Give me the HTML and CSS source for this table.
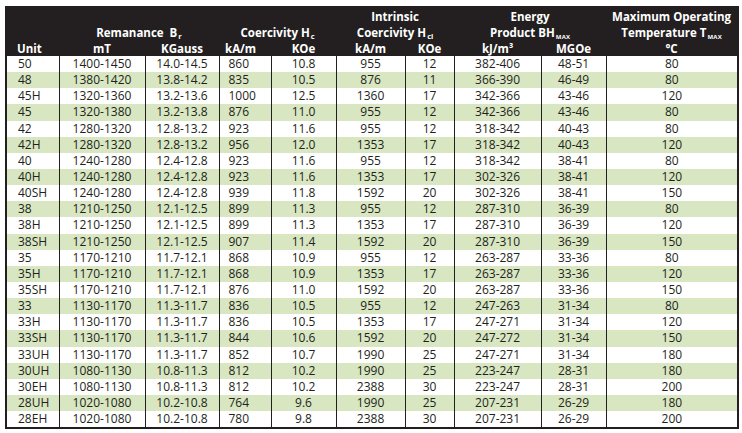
FILE: index.html
```html
<!DOCTYPE html>
<html lang="en">
<head>
<meta charset="utf-8">
<title>NdFeB Grades</title>
<link rel="stylesheet" href="styles.css">
</head>
<body>
<table class="grades">
  <colgroup>
    <col class="c-unit"><col class="c-mt"><col class="c-kg"><col class="c-hca"><col class="c-hck">
    <col class="c-hcia"><col class="c-hcik"><col class="c-kj"><col class="c-mgoe"><col class="c-temp">
  </colgroup>
  <thead>
    <tr class="h1">
      <th colspan="5"></th>
      <th colspan="2">Intrinsic</th>
      <th colspan="2">Energy</th>
      <th>Maximum Operating</th>
    </tr>
    <tr class="h2">
      <th></th>
      <th colspan="2">Remanance&nbsp; B<sub>r</sub></th>
      <th colspan="2">Coercivity H<sub>c</sub></th>
      <th colspan="2">Coercivity H<sub>ci</sub></th>
      <th colspan="2">Product BH<sub class="max">MAX</sub></th>
      <th>Temperature T<sub class="max">MAX</sub></th>
    </tr>
    <tr class="h3">
      <th class="left">Unit</th>
      <th>mT</th>
      <th>KGauss</th>
      <th class="lpad">kA/m</th>
      <th>KOe</th>
      <th>kA/m</th>
      <th>KOe</th>
      <th>kJ/m³</th>
      <th>MGOe</th>
      <th>°C</th>
    </tr>
  </thead>
  <tbody>
    <tr><td>50</td><td>1400-1450</td><td>14.0-14.5</td><td>860</td><td>10.8</td><td>955</td><td>12</td><td>382-406</td><td>48-51</td><td>80</td></tr>
    <tr><td>48</td><td>1380-1420</td><td>13.8-14.2</td><td>835</td><td>10.5</td><td>876</td><td>11</td><td>366-390</td><td>46-49</td><td>80</td></tr>
    <tr><td>45H</td><td>1320-1360</td><td>13.2-13.6</td><td>1000</td><td>12.5</td><td>1360</td><td>17</td><td>342-366</td><td>43-46</td><td>120</td></tr>
    <tr><td>45</td><td>1320-1380</td><td>13.2-13.8</td><td>876</td><td>11.0</td><td>955</td><td>12</td><td>342-366</td><td>43-46</td><td>80</td></tr>
    <tr><td>42</td><td>1280-1320</td><td>12.8-13.2</td><td>923</td><td>11.6</td><td>955</td><td>12</td><td>318-342</td><td>40-43</td><td>80</td></tr>
    <tr><td>42H</td><td>1280-1320</td><td>12.8-13.2</td><td>956</td><td>12.0</td><td>1353</td><td>17</td><td>318-342</td><td>40-43</td><td>120</td></tr>
    <tr><td>40</td><td>1240-1280</td><td>12.4-12.8</td><td>923</td><td>11.6</td><td>955</td><td>12</td><td>318-342</td><td>38-41</td><td>80</td></tr>
    <tr><td>40H</td><td>1240-1280</td><td>12.4-12.8</td><td>923</td><td>11.6</td><td>1353</td><td>17</td><td>302-326</td><td>38-41</td><td>120</td></tr>
    <tr><td>40SH</td><td>1240-1280</td><td>12.4-12.8</td><td>939</td><td>11.8</td><td>1592</td><td>20</td><td>302-326</td><td>38-41</td><td>150</td></tr>
    <tr><td>38</td><td>1210-1250</td><td>12.1-12.5</td><td>899</td><td>11.3</td><td>955</td><td>12</td><td>287-310</td><td>36-39</td><td>80</td></tr>
    <tr><td>38H</td><td>1210-1250</td><td>12.1-12.5</td><td>899</td><td>11.3</td><td>1353</td><td>17</td><td>287-310</td><td>36-39</td><td>120</td></tr>
    <tr><td>38SH</td><td>1210-1250</td><td>12.1-12.5</td><td>907</td><td>11.4</td><td>1592</td><td>20</td><td>287-310</td><td>36-39</td><td>150</td></tr>
    <tr><td>35</td><td>1170-1210</td><td>11.7-12.1</td><td>868</td><td>10.9</td><td>955</td><td>12</td><td>263-287</td><td>33-36</td><td>80</td></tr>
    <tr><td>35H</td><td>1170-1210</td><td>11.7-12.1</td><td>868</td><td>10.9</td><td>1353</td><td>17</td><td>263-287</td><td>33-36</td><td>120</td></tr>
    <tr><td>35SH</td><td>1170-1210</td><td>11.7-12.1</td><td>876</td><td>11.0</td><td>1592</td><td>20</td><td>263-287</td><td>33-36</td><td>150</td></tr>
    <tr><td>33</td><td>1130-1170</td><td>11.3-11.7</td><td>836</td><td>10.5</td><td>955</td><td>12</td><td>247-263</td><td>31-34</td><td>80</td></tr>
    <tr><td>33H</td><td>1130-1170</td><td>11.3-11.7</td><td>836</td><td>10.5</td><td>1353</td><td>17</td><td>247-271</td><td>31-34</td><td>120</td></tr>
    <tr><td>33SH</td><td>1130-1170</td><td>11.3-11.7</td><td>844</td><td>10.6</td><td>1592</td><td>20</td><td>247-272</td><td>31-34</td><td>150</td></tr>
    <tr><td>33UH</td><td>1130-1170</td><td>11.3-11.7</td><td>852</td><td>10.7</td><td>1990</td><td>25</td><td>247-271</td><td>31-34</td><td>180</td></tr>
    <tr><td>30UH</td><td>1080-1130</td><td>10.8-11.3</td><td>812</td><td>10.2</td><td>1990</td><td>25</td><td>223-247</td><td>28-31</td><td>180</td></tr>
    <tr><td>30EH</td><td>1080-1130</td><td>10.8-11.3</td><td>812</td><td>10.2</td><td>2388</td><td>30</td><td>223-247</td><td>28-31</td><td>200</td></tr>
    <tr><td>28UH</td><td>1020-1080</td><td>10.2-10.8</td><td>764</td><td>9.6</td><td>1990</td><td>25</td><td>207-231</td><td>26-29</td><td>180</td></tr>
    <tr><td>28EH</td><td>1020-1080</td><td>10.2-10.8</td><td>780</td><td>9.8</td><td>2388</td><td>30</td><td>207-231</td><td>26-29</td><td>200</td></tr>
  </tbody>
</table>
</body>
</html>
```

FILE: styles.css
```css
html, body {
  margin: 0;
  padding: 0;
  background: #ffffff;
}

body {
  font-family: "Open Sans", "Noto Sans", "Liberation Sans", sans-serif;
  color: #231f20;
}

.grades {
  margin: 6px 0 0 5px;
  width: 732px;
  table-layout: fixed;
  border-collapse: collapse;
  border: 2px solid #231f20;
  border-top: 0;
}

.c-unit { width: 53px; }
.c-mt { width: 86px; }
.c-kg { width: 74px; }
.c-hca { width: 52px; }
.c-hck { width: 65px; }
.c-hcia { width: 69px; }
.c-hcik { width: 49px; }
.c-kj { width: 87px; }
.c-mgoe { width: 65px; }
.c-temp { width: 132px; }

.grades thead th {
  background: #231f20;
  color: #ffffff;
  font-weight: 700;
  font-size: 11.5px;
  text-align: center;
  padding: 0;
  line-height: 14px;
  white-space: nowrap;
  vertical-align: bottom;
}

.grades .h1 th { height: 18px; }
.grades .h2 th { height: 16px; }
.grades .h3 th { height: 16px; }

.grades thead th.left {
  text-align: left;
  padding-left: 10px;
}

.grades thead th.lpad {
  text-align: left;
  padding-left: 6px;
}

.grades sub {
  font-size: 7.5px;
  line-height: 0;
  vertical-align: -1.5px;
  margin-left: 1px;
}

.grades sub.max {
  font-size: 6px;
  letter-spacing: 0.2px;
}

.grades tbody td {
  font-size: 12px;
  line-height: 14px;
  height: 16.15px;
  padding: 0;
  text-align: center;
  white-space: nowrap;
  border-left: 1.5px solid #231f20;
  color: #231f20;
}

.grades tbody tr:nth-child(even) td {
  background: #d8e6c2;
}

.grades tbody td:first-child {
  text-align: left;
  padding-left: 11px;
  border-left: 2px solid #231f20;
}

.grades tbody td:nth-child(4) {
  text-align: left;
  padding-left: 9px;
}
```
